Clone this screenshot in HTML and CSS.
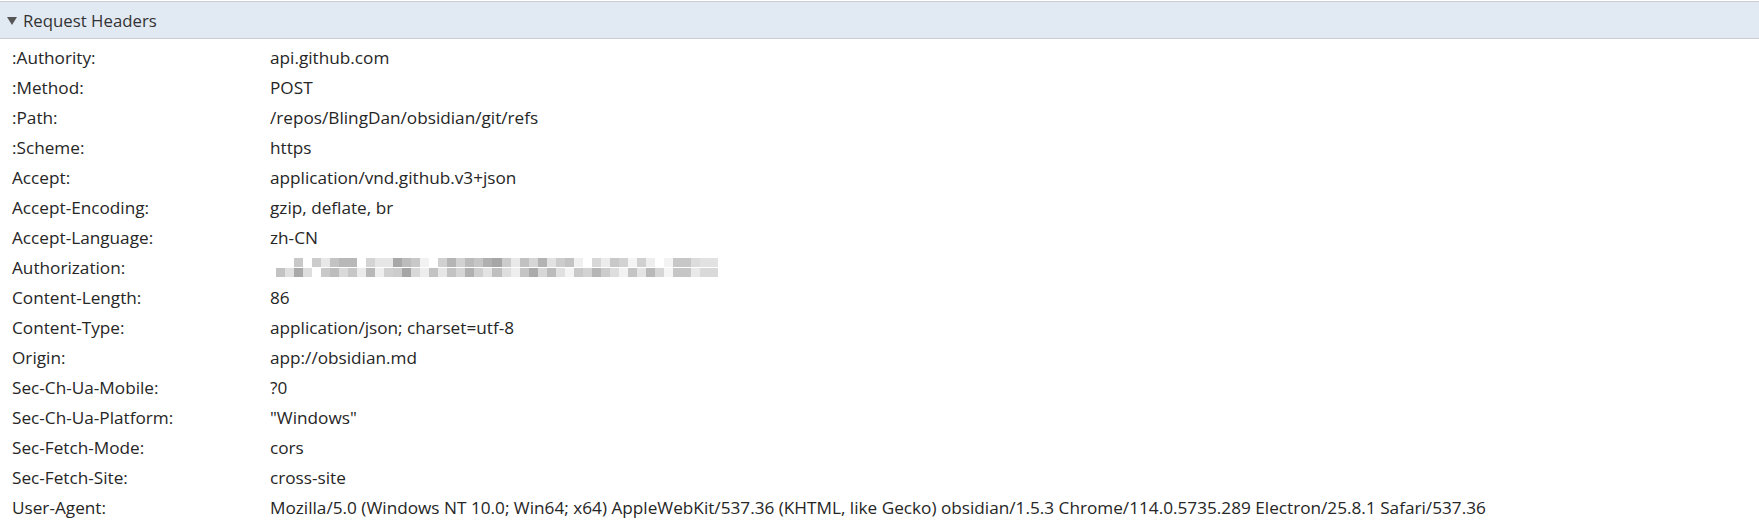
FILE: index.html
```html
<!DOCTYPE html>
<html>
<head>
<meta charset="utf-8">
<link rel="stylesheet" href="styles.css">
</head>
<body>
<section class="panel">
  <div class="panel-header">
    <span class="caret"></span>
    <span class="title">Request Headers</span>
  </div>
  <div class="rows">
    <div class="row"><span class="key">:Authority:</span><span class="val">api.github.com</span></div>
    <div class="row"><span class="key">:Method:</span><span class="val">POST</span></div>
    <div class="row"><span class="key">:Path:</span><span class="val">/repos/BlingDan/obsidian/git/refs</span></div>
    <div class="row"><span class="key">:Scheme:</span><span class="val">https</span></div>
    <div class="row"><span class="key">Accept:</span><span class="val">application/vnd.github.v3+json</span></div>
    <div class="row"><span class="key">Accept-Encoding:</span><span class="val">gzip, deflate, br</span></div>
    <div class="row"><span class="key">Accept-Language:</span><span class="val">zh-CN</span></div>
    <div class="row"><span class="key">Authorization:</span><span class="val"><span class="redacted"><span class="px-top"></span><span class="px-bottom"></span></span></span></div>
    <div class="row"><span class="key">Content-Length:</span><span class="val">86</span></div>
    <div class="row"><span class="key">Content-Type:</span><span class="val">application/json; charset=utf-8</span></div>
    <div class="row"><span class="key">Origin:</span><span class="val">app://obsidian.md</span></div>
    <div class="row"><span class="key">Sec-Ch-Ua-Mobile:</span><span class="val">?0</span></div>
    <div class="row"><span class="key">Sec-Ch-Ua-Platform:</span><span class="val">"Windows"</span></div>
    <div class="row"><span class="key">Sec-Fetch-Mode:</span><span class="val">cors</span></div>
    <div class="row"><span class="key">Sec-Fetch-Site:</span><span class="val">cross-site</span></div>
    <div class="row"><span class="key">User-Agent:</span><span class="val">Mozilla/5.0 (Windows NT 10.0; Win64; x64) AppleWebKit/537.36 (KHTML, like Gecko) obsidian/1.5.3 Chrome/114.0.5735.289 Electron/25.8.1 Safari/537.36</span></div>
  </div>
</section>
</body>
</html>
```
FILE: styles.css
```css
html, body {
  margin: 0;
  padding: 0;
  background: #ffffff;
}
body {
  padding-top: 1px;
  font-family: "Open Sans", "Noto Sans", sans-serif;
  font-size: 16.8px;
  color: #262626;
}
.panel-header {
  height: 36px;
  display: flex;
  align-items: center;
  background: #e1e9f3;
  border-top: 1px solid #c9ccd1;
  border-bottom: 1px solid #c9ccd1;
  padding-left: 7px;
  color: #333;
}
.caret {
  width: 0;
  height: 0;
  border-left: 5px solid transparent;
  border-right: 5px solid transparent;
  border-top: 8px solid #555;
  margin-right: 6px;
  margin-top: 1px;
}
.rows {
  padding-top: 3px;
  font-size: 17.2px;
}
.row {
  display: grid;
  grid-template-columns: 270px auto;
  height: 30px;
  align-items: center;
  white-space: nowrap;
}
.key {
  padding-left: 12px;
}
.redacted {
  display: flex;
  flex-direction: column;
  width: 451px;
  height: 19px;
  margin-left: -3px;
}
.px-top, .px-bottom {
  display: block;
  height: 9px;
}
.px-top {
  margin-bottom: 1px;
  background: linear-gradient(90deg,
    #fff 0 4%, #fff 4% 6%, #c9c9c9 6% 8%, #fff 8% 10%, #ccc 10% 12%, #e8e8e8 12% 14%,
    #c3c3c3 14% 16%, #b8b8b8 16% 20%, #fff 20% 22%, #d4d4d4 22% 24%, #e6e6e6 24% 28%,
    #a8a8a8 28% 30%, #bcbcbc 30% 32%, #c8c8c8 32% 34%, #f2f2f2 34% 36%, #fff 36% 38%,
    #d0d0d0 38% 40%, #b5b5b5 40% 42%, #d2d2d2 42% 44%, #bbb 44% 46%, #c6c6c6 46% 48%,
    #b0b0b0 48% 50%, #a6a6a6 50% 52%, #ccc 52% 54%, #e9e9e9 54% 56%, #c1c1c1 56% 58%,
    #d6d6d6 58% 60%, #b3b3b3 60% 62%, #e2e2e2 62% 64%, #ccc 64% 66%, #c3c3c3 66% 68%,
    #f0f0f0 68% 70%, #fff 70% 72%, #d8d8d8 72% 74%, #ececec 74% 76%, #c8c8c8 76% 78%,
    #d2d2d2 78% 80%, #f4f4f4 80% 82%, #d0d0d0 82% 84%, #eee 84% 86%, #fff 86% 88%,
    #f3f3f3 88% 90%, #c7c7c7 90% 94%, #dcdcdc 94% 96%, #e2e2e2 96% 100%);
}
.px-bottom {
  background: linear-gradient(90deg,
    #fff 0 2%, #c3c3c3 2% 4%, #e0e0e0 4% 6%, #a9a9a9 6% 8%, #dedede 8% 10%, #fff 10% 12%,
    #c9c9c9 12% 14%, #bdbdbd 14% 16%, #d9d9d9 16% 18%, #c6c6c6 18% 20%, #eaeaea 20% 22%,
    #b8b8b8 22% 24%, #eeeeee 24% 26%, #d0d0d0 26% 28%, #ccc 28% 30%, #a5a5a5 30% 32%,
    #d8d8d8 32% 34%, #ededed 34% 36%, #c3c3c3 36% 38%, #e6e6e6 38% 40%, #c2c2c2 40% 42%,
    #d5d5d5 42% 44%, #b0b0b0 44% 46%, #cfcfcf 46% 48%, #e3e3e3 48% 50%, #bfbfbf 50% 52%,
    #dedede 52% 54%, #eee 54% 56%, #c5c5c5 56% 58%, #aaaaaa 58% 60%, #d7d7d7 60% 62%,
    #bbbbbb 62% 64%, #e0e0e0 64% 66%, #f4f4f4 66% 68%, #c9c9c9 68% 70%, #d3d3d3 70% 72%,
    #b6b6b6 72% 74%, #cccccc 74% 76%, #ddd 76% 78%, #f2f2f2 78% 80%, #c4c4c4 80% 82%,
    #e4e4e4 82% 84%, #b9b9b9 84% 86%, #d6d6d6 86% 88%, #f5f5f5 88% 90%, #c6c6c6 90% 94%,
    #e9e9e9 94% 96%, #d9d9d9 96% 100%);
}
```
